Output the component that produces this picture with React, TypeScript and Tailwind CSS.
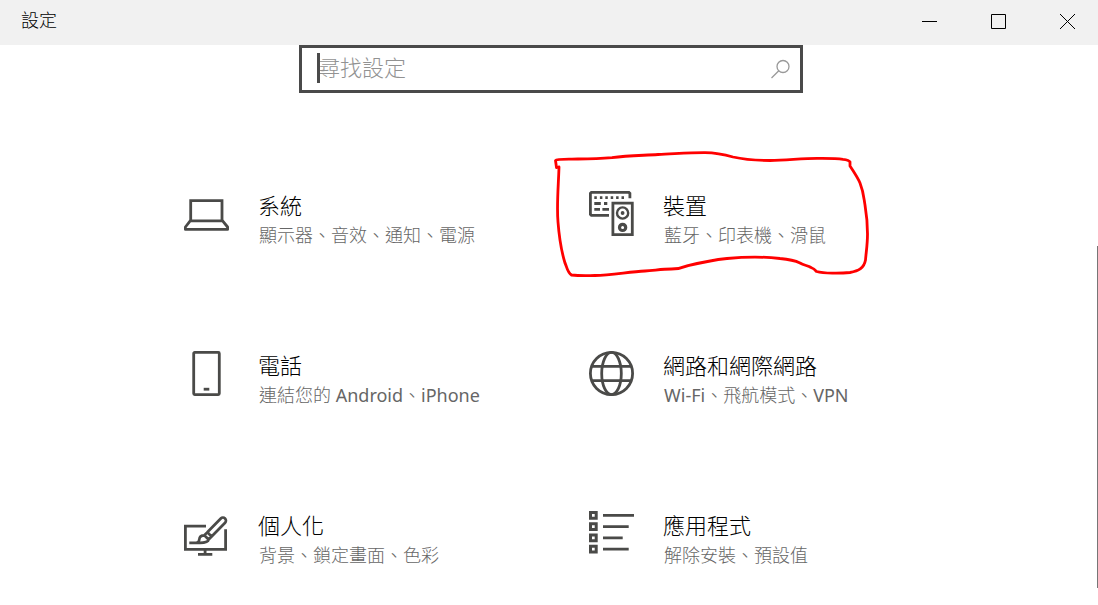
import type { ReactNode } from "react";

type Category = {
  id: string;
  title: string;
  description: ReactNode;
  icon: ReactNode;
  isMarked?: boolean;
};

// Latin words need a heavier cut to sit well beside the light CJK glyphs
function Latin({ children }: { children: ReactNode }) {
  return <span className="font-normal">{children}</span>;
}

const categories: Category[] = [
  {
    id: "system",
    title: "系統",
    description: "顯示器、音效、通知、電源",
    icon: (
      <>
        <path d="M6.7 30.5V10.7H38v19.8" />
        <path d="M6.2 30.8h32.4l5 6.2v2.4H1.4V37z" strokeLinejoin="round" />
      </>
    ),
  },
  {
    id: "devices",
    title: "裝置",
    description: "藍牙、印表機、滑鼠",
    isMarked: true,
    icon: (
      <>
        <path d="M20 25.3H2.4l-1-1V3.4l1-1h37.5l1 1v4.8" />
        <path d="M5.3 7.7h2.5m3.1 0h2.5m2.9 0h2.5m2.9 0h2.5m2.9 0h2.5m2.9 0h2.5M5.3 13.5h6.5m3.2 0h3.3M5.3 19.3H11m2.4 0H20" />
        <path d="M23.9 13.1h19.4v31.5H23.9z" />
        <circle cx="33.6" cy="23" r="5.6" strokeWidth="2.4" />
        <circle cx="33.6" cy="23" r="1.9" fill="currentColor" stroke="none" />
        <circle cx="33.6" cy="37.4" r="3.1" strokeWidth="3.2" />
      </>
    ),
  },
  {
    id: "phone",
    title: "電話",
    description: (
      <>
        連結您的 <Latin>Android</Latin>、<Latin>iPhone</Latin>
      </>
    ),
    icon: (
      <>
        <rect x="9.7" y="2.4" width="25.6" height="42.2" rx="1" />
        <path d="M19.7 39.2h5.6" />
      </>
    ),
  },
  {
    id: "network",
    title: "網路和網際網路",
    description: (
      <>
        <Latin>Wi-Fi</Latin>、飛航模式、<Latin>VPN</Latin>
      </>
    ),
    icon: (
      <>
        <circle cx="22.5" cy="23.5" r="21.1" />
        <ellipse cx="22.5" cy="23.5" rx="9.8" ry="21.1" />
        <path d="M3 16.3h39M3 30.7h39" />
      </>
    ),
  },
  {
    id: "personalization",
    title: "個人化",
    description: "背景、鎖定畫面、色彩",
    icon: (
      <>
        <path d="M22 16.1H1.4v23.2h40.2v-20M21.1 39.3v5M14 44.4h14.3" />
        <path
          d="M23.3 22.3 36.8 8.5a3 3 0 0 1 4.3 4.2L27.6 26.5M23.3 22.3l4.3 4.2-3 3-4.3-4.2zM20.3 25.3c-3.2 0-4.8 1.6-5 4-.1 2-1.2 3.5-3.3 3.5H5.3h10.5c5.2 0 8.4-.4 8.8-3.3"
          strokeWidth="2.7"
        />
      </>
    ),
  },
  {
    id: "apps",
    title: "應用程式",
    description: "解除安裝、預設值",
    icon: (
      <>
        <path
          d="M1.5 2.5h5.7v5.7H1.5zM1.5 13.8h5.7v5.7H1.5zM1.5 25.1h5.7v5.7H1.5zM1.5 36.3h5.7V42H1.5z"
          strokeWidth="3"
        />
        <path d="M14 5.3h31M14 16.6h25.7M14 27.9h19.7M14 39.1h25.7" />
      </>
    ),
  },
];

function TitleBar() {
  return (
    <header className="flex h-[45px] shrink-0 items-start justify-between bg-[#f1f1f1] pl-[21px] text-black">
      <h1 className="text-[18px] leading-[41px]">設定</h1>
      <div className="-mr-1 flex">
        <button aria-label="最小化" className="flex h-[43px] w-[69px] items-center justify-center" type="button">
          <svg className="h-[15px] w-[15px]" fill="none" stroke="currentColor" viewBox="0 0 15 15">
            <path d="M0 7.5h15" />
          </svg>
        </button>
        <button aria-label="最大化" className="flex h-[43px] w-[69px] items-center justify-center" type="button">
          <svg className="h-[15px] w-[15px]" fill="none" stroke="currentColor" viewBox="0 0 15 15">
            <path d="M.5.5h14v14H.5z" />
          </svg>
        </button>
        <button aria-label="關閉" className="flex h-[43px] w-[69px] items-center justify-center" type="button">
          <svg className="h-[15px] w-[15px]" fill="none" stroke="currentColor" viewBox="0 0 15 15">
            <path d="m0 0 15 15M15 0 0 15" />
          </svg>
        </button>
      </div>
    </header>
  );
}

function SearchBox() {
  return (
    <div className="relative flex h-12 w-full max-w-[504px] items-center border-3 border-[#4a4a4a] bg-white pr-[9px] pb-px pl-4">
      <span aria-hidden className="absolute top-[5px] left-[15px] h-[30px] w-[3px] bg-[#4a4a4a]" />
      <input
        aria-label="尋找設定"
        className="min-w-0 flex-1 pb-1 text-[22px] leading-8 font-light outline-none placeholder:text-[#929292]"
        placeholder="尋找設定"
        type="text"
      />
      <button aria-label="搜尋" className="text-[#999999]" type="button">
        <svg className="h-5 w-5" fill="none" stroke="currentColor" strokeWidth="1.3" viewBox="0 0 20 20">
          <circle cx="12" cy="7.5" r="6" />
          <path d="M7.8 11.8.5 19" />
        </svg>
      </button>
    </div>
  );
}

// Hand-drawn outline around a tile
function RedMark() {
  return (
    <svg
      aria-hidden
      className="pointer-events-none absolute -top-10 left-0 h-[130px] w-[325px]"
      fill="none"
      stroke="#ff0000"
      strokeLinecap="round"
      strokeLinejoin="round"
      strokeWidth="2.8"
      viewBox="549 150 325 130"
    >
      <path d="M556.5 167.5 555.5 160.5C557 158.5 570 159.5 578 159C590 158.8 600 158.5 612 157.6C628 155.5 642 155.5 658 154.5C675 153.8 690 152.5 705 152.6C718 152.8 726 155 733 157C744 159.5 756 160.5 770 160.5C788 160 803 158.5 817 158.4C828 158.3 838 158.5 843 159.3Q849 160 850 162V166C854 172 858 178 860 183C864 193 864 200 865 205C867 217 867.5 224 867.5 234C867.5 245 866 253 865.5 260C864 268 859 271 850 272.5C840 273.5 824 273.5 816.5 271.5Q814 268.5 811 267.5C808 265.5 804 265.5 800 263C794 260 786 259 780 258.5C763 256.5 743 257 727 258.5C713 260 701 262.5 688 265.6C682 268 677 269 671.5 269C662 269 654 270.5 645 271C629 272 611 275 595 275.5C586 275.8 578 275.8 571.5 275C567 272 567 267 565 263C561 250 559 235 558 222C556.5 205 558.5 185 559 167" />
    </svg>
  );
}

function CategoryTile({ category }: { category: Category }) {
  return (
    <a className="relative flex items-start gap-[26px] pl-10" href={`#${category.id}`}>
      <svg
        aria-hidden
        className="h-12 w-12 shrink-0 text-[#4a4a48]"
        fill="none"
        stroke="currentColor"
        strokeWidth="2.8"
        viewBox="0 0 48 48"
      >
        {category.icon}
      </svg>
      <div className="min-w-0">
        <h2 className="text-[22px] leading-[30px] text-black">{category.title}</h2>
        <p className="mt-0.5 pl-px text-[18px] leading-[26px] text-[#666666]">{category.description}</p>
      </div>
      {category.isMarked && <RedMark />}
    </a>
  );
}

export default function App() {
  return (
    <div className="flex h-screen flex-col overflow-hidden bg-white font-['Noto_Sans','Noto_Sans_CJK_TC',sans-serif] font-light">
      <TitleBar />
      <main className="relative min-h-0 flex-1">
        <div className="flex justify-center pl-1">
          <SearchBox />
        </div>
        <nav
          aria-label="設定類別"
          className="mx-auto mt-[97px] grid w-full max-w-[810px] grid-cols-2 gap-y-[102px]"
        >
          {categories.map((category) => (
            <CategoryTile category={category} key={category.id} />
          ))}
        </nav>
        <div aria-hidden className="absolute top-[201px] right-0 bottom-[17px] w-px bg-[#767676]" />
      </main>
    </div>
  );
}
